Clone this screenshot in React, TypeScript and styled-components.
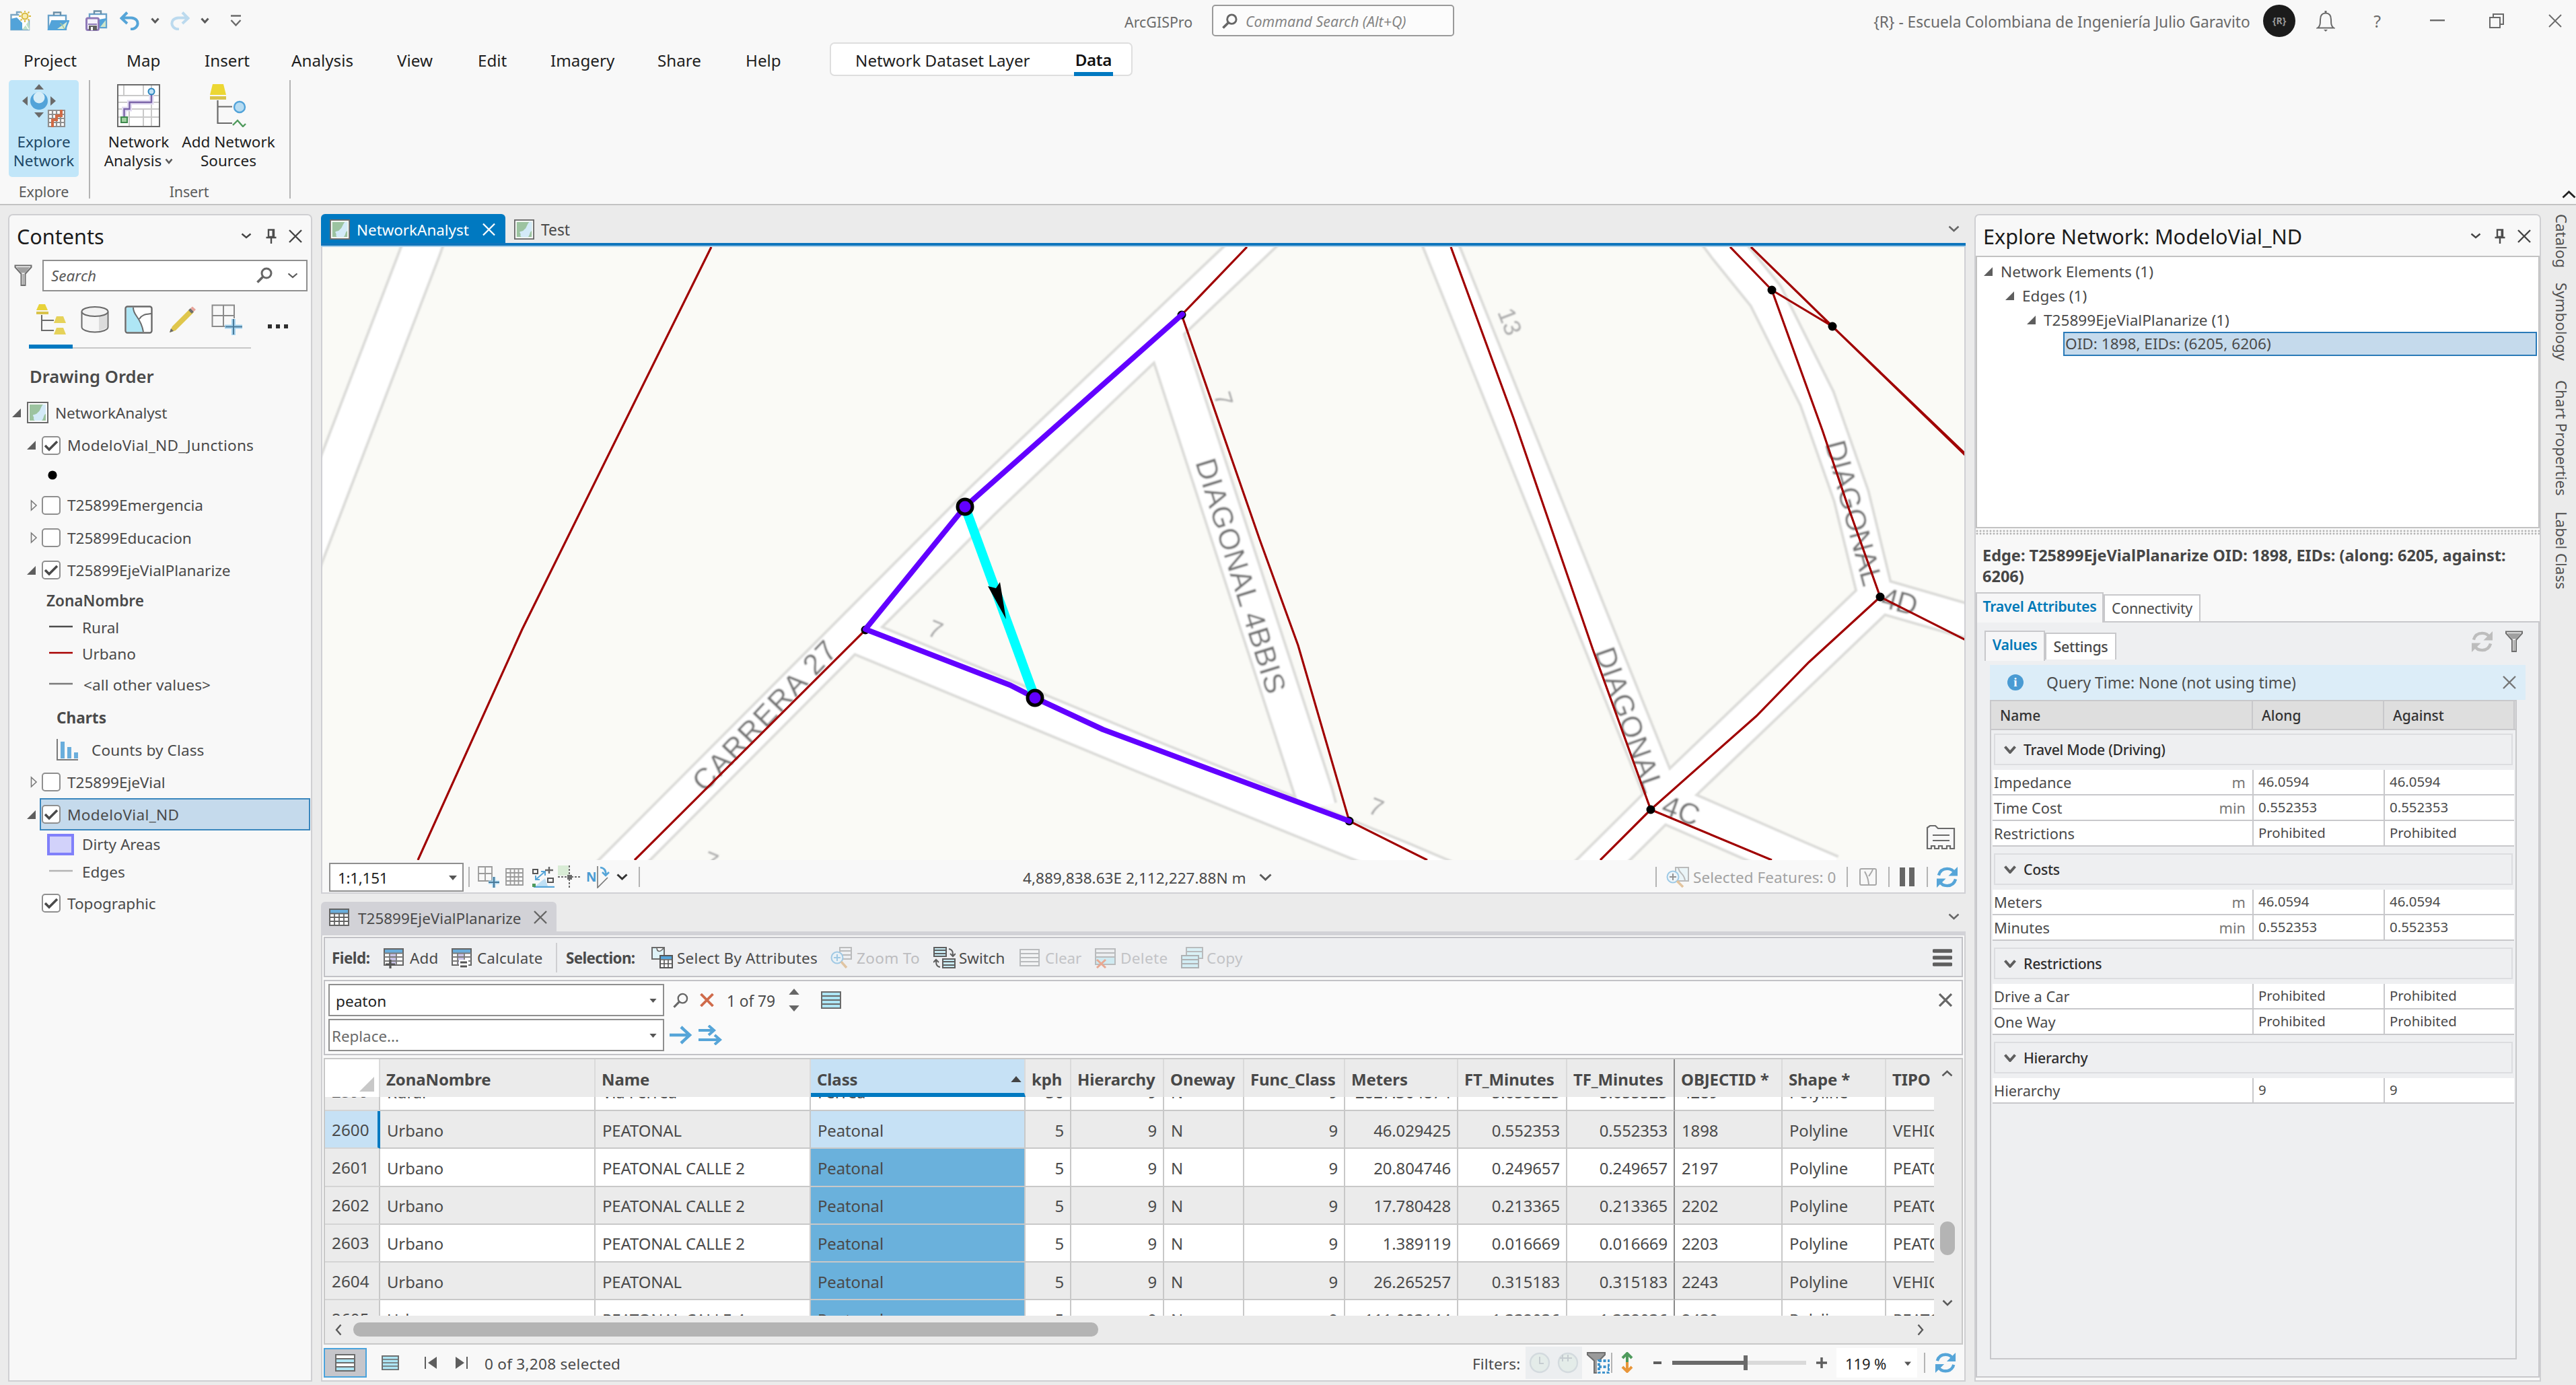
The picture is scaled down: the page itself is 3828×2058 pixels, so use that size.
import React from "react";
import styled, { createGlobalStyle } from "styled-components";

const Global = createGlobalStyle`
  html, body { margin: 0; padding: 0; background: #ebebeb; }
  *, *::before, *::after { box-sizing: border-box; }
  body { font-family: "Noto Sans", "Open Sans", sans-serif; font-size: 24.2px; color: #4a4a4a; }
  svg { display: block; flex: none; }
`;

/* ---------- generic parts ---------- */
const Window = styled.div`
  width: 3828px; height: 2058px; overflow: hidden; background: #ebebeb;
  display: flex; flex-direction: column; white-space: nowrap;
`;
const Text = styled.span<{ $s?: number; $c?: string; $b?: number; $ls?: number; $w?: number; $i?: boolean; $pt?: number }>`
  flex: none;
  font-size: ${p => p.$s ?? 24.2}px;
  color: ${p => p.$c ?? "inherit"};
  font-weight: ${p => p.$b ?? 400};
  letter-spacing: ${p => p.$ls ?? 0}px;
  font-style: ${p => (p.$i ? "italic" : "normal")};
  padding-top: ${p => p.$pt ?? 0}px;
  ${p => (p.$w ? `width:${p.$w}px;` : "")}
`;
const Slot = styled.div<{ $w?: number; $pt?: number }>`
  flex: none; display: flex; align-items: center;
  ${p => (p.$w ? `width:${p.$w}px;` : "")}
  padding-top: ${p => p.$pt ?? 0}px;
`;
const Space = styled.div<{ $w?: number }>`
  ${p => (p.$w ? `flex:none;width:${p.$w}px;` : "flex:1;")}
`;
const VLine = styled.div<{ $h: number; $c?: string }>`
  flex: none; width: 2px; height: ${p => p.$h}px; background: ${p => p.$c ?? "#b4b4b4"};
`;

/* ---------- small icons ---------- */
type IP = { w?: number; h?: number; c?: string; sw?: number };
const Chevron = ({ w = 16, h = 10, c = "#5a5a5a", sw = 3 }: IP) => (
  <svg width={w} height={h} viewBox={`0 0 ${w} ${h}`} fill="none"><path d={`M1.5 1.5L${w / 2} ${h - 2}L${w - 1.5} 1.5`} stroke={c} strokeWidth={sw} /></svg>
);
const ChevronUp = ({ w = 16, h = 10, c = "#5a5a5a", sw = 2.5 }: IP) => (
  <svg width={w} height={h} viewBox={`0 0 ${w} ${h}`} fill="none"><path d={`M1.5 ${h - 1.5}L${w / 2} 2L${w - 1.5} ${h - 1.5}`} stroke={c} strokeWidth={sw} /></svg>
);
const ChevronSide = ({ right = false }: { right?: boolean }) => (
  <svg width="10" height="18" viewBox="0 0 10 18" fill="none"><path d={right ? "M1.5 1.5L8 9L1.5 16.5" : "M8.5 1.5L2 9L8.5 16.5"} stroke="#5a5a5a" strokeWidth="2.4" /></svg>
);
const Cross = ({ w = 20, h = 20, c = "#5a5a5a", sw = 2.4 }: IP) => (
  <svg width={w} height={h} viewBox="0 0 20 20" fill="none"><path d="M1 1L19 19M19 1L1 19" stroke={c} strokeWidth={sw} /></svg>
);
const Pin = () => (
  <svg width="16" height="22" viewBox="0 0 16 22" fill="none"><path d="M4 1.5H12V12H4ZM0.5 13H15.5M8 13V22" stroke="#4d4d4d" strokeWidth="2.4" /><path d="M9.5 1V12H13V1Z" fill="#4d4d4d" /></svg>
);
const Magnifier = ({ w = 24, c = "#666", sw = 3 }: IP) => (
  <svg width={w} height={w} viewBox="0 0 24 24" fill="none"><circle cx="15" cy="9" r="7" stroke={c} strokeWidth={sw} /><path d="M10 14L1.5 22.5" stroke={c} strokeWidth={sw + 0.8} /></svg>
);
const Down = ({ w = 12, h = 7, c = "#555" }: IP) => (
  <svg width={w} height={h} viewBox="0 0 12 7"><path d="M0 0H12L6 7Z" fill={c} /></svg>
);
const Up = ({ w = 18, h = 9, c = "#666" }: IP) => (
  <svg width={w} height={h} viewBox="0 0 12 7"><path d="M0 7H12L6 0Z" fill={c} /></svg>
);
const Funnel = ({ w = 26, h = 32 }: IP) => (
  <svg width={w} height={h} viewBox="0 0 26 32"><path d="M1 1.5H25V4L16 14V31H10V14L1 4Z" fill="#f8f8f8" stroke="#6e6e6e" strokeWidth="2" /><path d="M3 4H23L16 12.5H10Z" fill="#a0a0a0" /><path d="M13 14V30" stroke="#9a9a9a" strokeWidth="2" /></svg>
);
const Refresh = ({ w = 34, c = "#56a5d8" }: IP) => (
  <svg width={w} height={w} viewBox="0 0 34 34" fill="none">
    <path d="M4 14C6 7 11 4 17 4C22 4 26 6 28 10" stroke={c} strokeWidth="4.6" /><path d="M33 1V15H19Z" fill={c} />
    <path d="M30 20C28 27 23 30 17 30C12 30 8 28 6 24" stroke={c} strokeWidth="4.6" /><path d="M1 33V19H15Z" fill={c} />
  </svg>
);
const MapIcon = ({ w = 32 }: IP) => (
  <svg width={w} height={w} viewBox="0 0 32 32"><rect x="1" y="1" width="30" height="30" fill="#fff" stroke="#6a6a6a" strokeWidth="2" /><rect x="4" y="4" width="24" height="24" fill="#9cc3a0" /><path d="M28 4V18C24 20 26 24 22 28H12C8 26 12 24 9 21C8 18 14 20 16 16C20 14 20 8 24 4Z" fill="#d3eaf8" /></svg>
);
const TableIcon = ({ w = 30, h = 26 }: IP) => (
  <svg width={w} height={h} viewBox="0 0 30 26"><rect x="1" y="1" width="28" height="24" fill="#fff" stroke="#646464" strokeWidth="2" /><rect x="2" y="2" width="26" height="5" fill="#6aaedc" /><path d="M1 7.500H29M1 13H29M1 19H29M8 7V25M15 7V25M22 7V25" stroke="#646464" strokeWidth="1.8" /></svg>
);
const RowsIcon = ({ c = "#aee6f5", a = c, s = "#6a6a6a", w = 30, h = 26 }: { c?: string; a?: string; s?: string; w?: number; h?: number }) => (
  <svg width={w} height={h} viewBox="0 0 30 26"><rect x="1" y="1" width="28" height="24" fill={c} stroke={s} strokeWidth="2" /><path d="M2 7H28V13H2ZM2 19H28V25H2Z" fill={a} /><path d="M1 7H29M1 13H29M1 19H29" stroke={s} strokeWidth="1.8" /><rect x="1" y="1" width="28" height="24" fill="none" stroke={s} strokeWidth="2" /></svg>
);

/* ---------- title bar ---------- */
const TitleBar = styled.div`flex: none; height: 63px; background: #f8f8f8; display: flex; align-items: flex-start; padding-top: 7px;`;
const TitleInner = styled.div`display: flex; align-items: center; height: 47px; width: 100%; padding-left: 15px; color: #6a6a6a;`;
const CommandBox = styled.div`
  flex: none; width: 360px; height: 47px; border: 2px solid #9a9a9a; border-radius: 5px; background: #fcfcfc;
  display: flex; align-items: center; padding: 1px 0 0 13px; gap: 12px;
`;
const Avatar = styled.div`
  flex: none; width: 48px; height: 48px; border-radius: 50%; background: #1b1b1b; color: #999;
  font-size: 14px; font-weight: 700; display: flex; align-items: center; justify-content: center;
`;

const NewProject = () => (
  <svg width="32" height="30" viewBox="0 0 32 30" fill="none">
    <path d="M1.5 6H28V28H1.500Z" stroke="#7aa6c4" strokeWidth="2.4" fill="#fff" /><path d="M10 6V2H20V6" stroke="#7aa6c4" strokeWidth="2.4" />
    <path d="M1 12L10 10L18 18V28.500H1Z" fill="#52a3d9" /><path d="M28 15L18 28H29Z" fill="#bfe0c8" />
    <path d="M19 18C24 18 24 24 28 28" stroke="#fff" strokeWidth="1.500" /><circle cx="22" cy="8" r="9" fill="#f8f8f8" />
    <circle cx="22" cy="8" r="4.500" stroke="#d8b93a" strokeWidth="2" fill="#f6ecb4" />
    <path d="M22 -1V2M22 14V17M13 8H16M28 8H31M15.500 1.500L17.500 3.500M28.500 1.500L26.500 3.500M15.500 14.500L17.500 12.500M28.500 14.500L26.500 12.500" stroke="#d8b93a" strokeWidth="1.800" />
  </svg>
);
const OpenProject = () => (
  <svg width="33" height="28" viewBox="0 0 33 28" fill="none">
    <path d="M2 6H28V27H2Z" stroke="#6aa2c9" strokeWidth="2.400" fill="#fff" /><path d="M10 6V1.500H20V6" stroke="#6a8ea6" strokeWidth="2.400" />
    <path d="M7 14H32L27 27H2Z" fill="#52a3d9" stroke="#52a3d9" strokeWidth="2" /><path d="M30 15L26 26H15Z" fill="#d9ecd2" /><path d="M19 18C24 18 23 24 26 26" stroke="#9cc3a0" strokeWidth="1.500" />
  </svg>
);
const SaveProject = () => (
  <svg width="33" height="31" viewBox="0 0 33 31" fill="none">
    <path d="M6 6H31V26H6Z" stroke="#6aa2c9" strokeWidth="2.400" fill="#fff" /><path d="M13 6V1.500H23V6" stroke="#6a8ea6" strokeWidth="2.400" />
    <path d="M20 14L31 12V26H20Z" fill="#52a3d9" /><path d="M30 15L22 25H30Z" fill="#cfe6c9" />
    <rect x="1.500" y="12" width="18" height="17.500" rx="2" fill="#f4f0fa" stroke="#8f7ab8" strokeWidth="3" /><path d="M4 20H17V22H4Z" fill="#8f7ab8" /><rect x="5" y="23" width="12" height="7" fill="#5e5e5e" /><rect x="8" y="25" width="3" height="5" fill="#fff" />
  </svg>
);
const Undo = ({ c = "#56a5d8", flip = false }: { c?: string; flip?: boolean }) => (
  <svg width="30" height="28" viewBox="0 0 30 28" fill="none"><g transform={flip ? "translate(30 0) scale(-1 1)" : undefined}><path d="M11 1.500L2.500 10L11 18M3 9.500H17C30 10 30 26 16 26.500" stroke={c} strokeWidth="4" /></g></svg>
);
const Bell = () => (
  <svg width="28" height="32" viewBox="0 0 28 32" fill="none"><path d="M2 26.500H26C22 24 22 20 22 14C22 8 19 4.500 14 4.500C9 4.500 6 8 6 14C6 20 6 24 2 26.500Z" stroke="#6a6a6a" strokeWidth="2" /><path d="M14 1V5" stroke="#6a6a6a" strokeWidth="3" /><path d="M11 29H17L14 32Z" fill="#6a6a6a" /></svg>
);

/* ---------- ribbon ---------- */
const MenuRow = styled.div`flex: none; height: 50px; background: #f8f8f8; display: flex; align-items: center; padding-left: 35px; color: #1e1e1e;`;
const MenuItem = styled.div<{ $w: number }>`flex: none; width: ${p => p.$w}px; padding-top: 3px; font-size: 24.2px;`;
const ContextTabs = styled.div`
  flex: none; width: 450px; height: 50px; border: 2px solid #dedede; border-radius: 7px; background: #fff;
  display: flex; align-items: center; justify-content: space-between; padding: 0 27px 0 36px; margin-left: 1px;
`;
const ActiveTab = styled.div`
  height: 50px; padding: 7px 2px 0; border-bottom: 6px solid #0079c1; font-weight: 600; color: #111; line-height: 38px; font-size: 24.2px; letter-spacing: -0.4px;
`;
const Ribbon = styled.div`
  flex: none; height: 192px; background: #f8f8f8; border-bottom: 2px solid #c3c3c3; display: flex; padding: 6px 0 0 13px; color: #1e1e1e;
`;
const Group = styled.div<{ $w: number }>`flex: none; width: ${p => p.$w}px; display: flex; flex-direction: column;`;
const GroupRow = styled.div`flex: none; display: flex; height: 149px;`;
const GroupName = styled.div`text-align: center; color: #5c5c5c; font-size: 21.5px; line-height: 34px; letter-spacing: -0.2px;`;
const BigButton = styled.div<{ $w: number; $on?: boolean }>`
  flex: none; width: ${p => p.$w}px; height: 144px; border-radius: 5px; padding-top: 6px;
  background: ${p => (p.$on ? "#c1e6f9" : "transparent")}; color: ${p => (p.$on ? "#1d4866" : "#1e1e1e")};
  display: flex; flex-direction: column; align-items: center; font-size: 22.5px; line-height: 28px; text-align: center;
`;
const BigLabel = styled.div`padding-top: 8px; display: flex; flex-direction: column; align-items: center;`;
const LabelLine = styled.div`display: flex; align-items: center; gap: 5px; height: 28px;`;
const CollapseSlot = styled.div`flex: 1; display: flex; justify-content: flex-end; align-items: flex-end; padding-bottom: 8px;`;

const ExploreIcon = () => (
  <svg width="64" height="64" viewBox="0 0 64 64">
    <circle cx="25" cy="25" r="13" fill="#52a3d9" /><circle cx="25" cy="20" r="8.500" fill="#d6edf8" />
    <path d="M18 8H32L25 0ZM18 42H32L25 50ZM8 18V32L0 25ZM42 18V32L50 25Z" fill="#6a6a6a" />
    <rect x="38" y="38" width="26" height="26" fill="#fff" /><path d="M39 38V64M45 38V64M51 38V64M57 38V64M63 38V64M38 39H64M38 45H64M38 51H64M38 57H64M38 63H64" stroke="#8f8f8f" strokeWidth="2.200" />
    <path d="M45 64V53H51V47H58V38" stroke="#cf6a45" strokeWidth="4" fill="none" />
  </svg>
);
const AnalysisIcon = () => (
  <svg width="64" height="64" viewBox="0 0 64 64" fill="none">
    <rect x="1" y="1" width="62" height="62" fill="#fff" stroke="#6a6a6a" strokeWidth="2" />
    <path d="M2 17H62M2 37H62M2 49H62M10 2V17M39 2V17M51 2V62M18 28V62M39 37V62M2 27H62" stroke="#c9c9c9" strokeWidth="2" />
    <path d="M10.500 50V37H18.500V27H51V12" stroke="#e3dcf2" strokeWidth="7" /><path d="M10.500 50V37H18.500V27H51V12" stroke="#7a64a8" strokeWidth="2.400" />
    <circle cx="51" cy="11" r="4.500" fill="#bfe0f5" stroke="#2b86bd" strokeWidth="2" /><rect x="6" y="49" width="9" height="8" fill="#9fcf9f" stroke="#3f8a4e" strokeWidth="2" />
  </svg>
);
const SourcesIcon = () => (
  <svg width="64" height="64" viewBox="0 0 64 64" fill="none">
    <path d="M8 0H24L28 16H4Z" fill="#ecd733" /><path d="M4 18H28V23H4Z" fill="#d9c34a" /><path d="M15.500 24V58H37M16 33.500H37" stroke="#6a6a6a" strokeWidth="2.200" />
    <circle cx="48" cy="34" r="8" fill="#b7dcf2" stroke="#52a3d9" strokeWidth="2.400" /><path d="M38 61L45 54L53 63L57 59" stroke="#4f9a5c" strokeWidth="2.400" />
  </svg>
);

/* ---------- docking ---------- */
const Body = styled.div`flex: 1; display: flex; padding: 13px 0 5px 12px; min-height: 0;`;
const Panel = styled.div<{ $w: number }>`
  flex: none; width: ${p => p.$w}px; background: #f8f8f8; border: 2px solid #cfcfd2; border-radius: 7px 7px 0 0;
  display: flex; flex-direction: column; margin-right: 13px; min-height: 0;
`;
const Center = styled.div`flex: none; width: 2444px; display: flex; flex-direction: column; margin-right: 13px; min-height: 0;`;
const SideStrip = styled.div`
  flex: none; width: 52px; margin-left: -13px; display: flex; flex-direction: column; align-items: center; padding-left: 8px;
`;
const SideLabel = styled.div<{ $h: number }>`
  writing-mode: vertical-rl; height: ${p => p.$h}px; font-size: 22.3px; line-height: 30px; color: #505050; flex: none;
`;

/* ---------- contents panel ---------- */
const PanelHead = styled.div<{ $pl: number }>`flex: none; height: 60px; display: flex; align-items: center; padding: 1px 13px 0 ${p => p.$pl}px; color: #1b1b1b;`;
const SearchRow = styled.div`flex: none; display: flex; align-items: center; gap: 15px; height: 56px; padding: 2px 5px 0 7px;`;
const SearchBox = styled.div`
  flex: 1; height: 47px; border: 2px solid #8f8f8f; background: #fff; display: flex; align-items: center; padding: 0 12px 0 11px;
`;
const TocTabs = styled.div`flex: none; height: 82px; display: flex; align-items: flex-start; padding-left: 29px; padding-top: 11px;`;
const TocTab = styled.div<{ $on?: boolean; $w?: number }>`
  flex: none; width: ${p => p.$w ?? 65}px; height: 71px; display: flex; align-items: center; justify-content: center; padding-bottom: ${p => (p.$on ? 10 : 14)}px;
  border-bottom: ${p => (p.$on ? "6px solid #0079c1" : "2px solid #c8c8c8")};
`;
const More = styled.div`display: flex; gap: 6px; padding: 35px 0 0 25px;`;
const Dot = styled.div`width: 6px; height: 6px; background: #2e2e2e;`;
const DrawOrder = styled.div`flex: none; height: 71px; padding: 24px 0 0 30px; font-size: 25.6px; font-weight: 600; color: #4a4a4a;`;
const TocRow = styled.div<{ $h: number; $pl: number; $ls?: number }>`
  flex: none; height: ${p => p.$h}px; display: flex; align-items: center; padding-left: ${p => p.$pl}px; font-size: 22.6px; letter-spacing: ${p => p.$ls ?? -0.05}px;
`;
const TocSelect = styled.div`
  flex: 1; height: 48px; display: flex; align-items: center; padding-left: 1px; margin-right: 1px;
  background: #c5daec; border: 2px solid #3a86bd; 
`;
const Check = styled.div`
  flex: none; width: 28px; height: 28px; border: 2px solid #8f8f8f; border-radius: 5px; background: #fff; margin-right: 10px;
  display: flex; align-items: center; justify-content: center;
`;
const Tri = ({ open }: { open?: boolean }) =>
  open ? (
    <svg width="13" height="13" viewBox="0 0 13 13"><path d="M13 0V13H0Z" fill="#5e5e5e" /></svg>
  ) : (
    <svg width="13" height="18" viewBox="0 0 13 18"><path d="M2.500 2L10 9L2.500 16Z" fill="none" stroke="#7a7a7a" strokeWidth="1.600" /></svg>
  );
const Tick = () => <svg width="20" height="18" viewBox="0 0 20 18"><path d="M1 9L7 15L19 3" stroke="#4a4a4a" strokeWidth="3.600" fill="none" /></svg>;
const Line = ({ c }: { c: string }) => <svg width="49" height="6" viewBox="0 0 49 6"><path d="M0 2H35" stroke={c} strokeWidth="2.600" /></svg>;

const Layer = ({ h, name, on, open, noTri, ls }: { h: number; name: string; on?: boolean; open?: boolean; noTri?: boolean; ls?: number }) => (
  <TocRow $h={h} $pl={26} $ls={ls}>
    <Slot $w={22}>{!noTri && (open ? <Tri open /> : <><Space $w={4} /><Tri /></>)}</Slot>
    <Check>{on && <Tick />}</Check>{name}
  </TocRow>
);

const Contents = () => (
  <Panel $w={452}>
    <PanelHead $pl={11}>
      <Text $s={30.6}>Contents</Text><Space />
      <Slot $w={37}><Chevron w={16} h={9} c="#444" sw={2.400} /></Slot><Slot $w={34}><Pin /></Slot><Cross c="#444" />
    </PanelHead>
    <SearchRow>
      <Funnel w={27} />
      <SearchBox><Text $s={22.500} $i $c="#5a5a5a">Search</Text><Space /><Magnifier /><Space $w={22} /><Chevron w={16} h={9} sw={2.200} /></SearchBox>
    </SearchRow>
    <TocTabs>
      <TocTab $on><svg width="46" height="46" viewBox="0 0 46 46"><path d="M5 0H14L18 9H1Z" fill="#e8d23a" /><path d="M1 11H19V15H1Z" fill="#d9c34a" /><path d="M9 16V39H27M9 24H27" stroke="#6a6a6a" strokeWidth="2" fill="none" /><path d="M31 18H41L45 28H27ZM31 35H41L45 45H27Z" fill="#e6d25a" /></svg></TocTab>
      <TocTab><svg width="42" height="42" viewBox="0 0 42 42"><path d="M1.500 9V32C1.500 36 10 39.500 21 39.500S40.500 36 40.500 32V9" fill="#f6f6f6" stroke="#6a6a6a" strokeWidth="2" /><path d="M27 15L39 11V33L27 38Z" fill="#dcdcdc" /><ellipse cx="21" cy="9" rx="19.500" ry="7" fill="#f2f2f2" stroke="#6a6a6a" strokeWidth="2" /></svg></TocTab>
      <TocTab><svg width="42" height="42" viewBox="0 0 42 42"><rect x="1.500" y="1.500" width="39" height="39" rx="3" fill="#fff" stroke="#6a6a6a" strokeWidth="2.400" /><path d="M3 3H13C13 16 24 16 28 39H3Z" fill="#aee6f5" /><path d="M13 3C13 16 24 16 28 39M22 20C26 13 32 13 40 12" stroke="#6a6a6a" strokeWidth="2" fill="none" /></svg></TocTab>
      <TocTab><svg width="42" height="42" viewBox="0 0 42 42"><path d="M2 40L6 31L32 5L38 10L11 37Z" fill="#dfc64c" /><path d="M2 40L4 34L8 38Z" fill="#6a6a6a" /><path d="M30 7L33 4L38 9L35 12Z" fill="#6e6e6e" /><path d="M33 4L36 1.500L41 6L38 9Z" fill="#e8a49a" /></svg></TocTab>
      <TocTab $w={70}><svg width="48" height="46" viewBox="0 0 48 46"><path d="M1.500 1.500H34V33H1.500ZM1.500 17H34M18 1.500V33" fill="none" stroke="#8a8a8a" strokeWidth="2" /><path d="M20 29H28V21H38V29H48V38H38V46H28V38H20Z" fill="#f8f8f8" /><path d="M33 22V46M20 33.500H46" stroke="#a9d6f0" strokeWidth="6" /><path d="M33 22V45M21 33.500H46" stroke="#4a7a9a" strokeWidth="2" /></svg></TocTab>
      <More><Dot /><Dot /><Dot /></More>
    </TocTabs>
    <DrawOrder>Drawing Order</DrawOrder>
    <TocRow $h={48} $pl={4} $ls={-0.15}><Slot $w={22}><Tri open /></Slot><MapIcon /><Space $w={10} />NetworkAnalyst</TocRow>
    <Layer h={49} name="ModeloVial_ND_Junctions" on open ls={0.25} />
    <TocRow $h={40} $pl={57}><svg width="14" height="14" viewBox="0 0 14 14"><circle cx="7" cy="7" r="6.600" fill="#000" /></svg></TocRow>
    <Layer h={49} name="T25899Emergencia" />
    <Layer h={48} name="T25899Educacion" />
    <Layer h={48} name="T25899EjeVialPlanarize" on open />
    <TocRow $h={42} $pl={55}><Text $s={22.600} $b={600}>ZonaNombre</Text></TocRow>
    <TocRow $h={38} $pl={59}><Line c="#4d4d4d" />Rural</TocRow>
    <TocRow $h={40} $pl={59}><Line c="#a80000" />Urbano</TocRow>
    <TocRow $h={52} $pl={59}><Line c="#7a7a7a" /><Space $w={2} /><Text $s={22.6} $ls={0.1}>&lt;all other values&gt;</Text></TocRow>
    <TocRow $h={47} $pl={70}><Text $s={22.600} $b={700}>Charts</Text></TocRow>
    <TocRow $h={48} $pl={70} $ls={0.1}><svg width="52" height="32" viewBox="0 0 52 32"><path d="M1 0V31H32" stroke="#7a7a7a" strokeWidth="2" fill="none" /><path d="M6 4H12V29H6ZM16 12H22V29H16ZM26 20H32V29H26Z" fill="#6aaedc" /></svg>Counts by Class</TocRow>
    <Layer h={48} name="T25899EjeVial" />
    <TocRow $h={48} $pl={26} $ls={0.35}><Slot $w={19}><Tri open /></Slot><TocSelect><Check><Tick /></Check>ModeloVial_ND</TocSelect></TocRow>
    <TocRow $h={41} $pl={56}><svg width="52" height="32" viewBox="0 0 52 32"><rect x="2" y="2" width="36" height="28" fill="#d2d2fa" stroke="#8080fa" strokeWidth="4" /></svg>Dirty Areas</TocRow>
    <TocRow $h={40} $pl={59}><Line c="#b4b4b4" />Edges</TocRow>
    <Layer h={54} name="Topographic" on noTri />
  </Panel>
);

/* ---------- map view ---------- */
const DocTabs = styled.div`flex: none; height: 43px; display: flex; align-items: stretch;`;
const DocTab = styled.div<{ $on?: boolean; $w: number }>`
  flex: none; width: ${p => p.$w}px; display: flex; align-items: center; padding: 2px 0 0 13px; gap: 10px; border-radius: 6px 6px 0 0;
  background: ${p => (p.$on ? "#0079c1" : "transparent")}; color: ${p => (p.$on ? "#fff" : "#4a4a4a")}; font-size: 22.600px;
`;
const BlueRule = styled.div`flex: none; height: 6px; background: #0f75bc; border-bottom: 2px solid #a9cfe9; border-top: 0;`;
const MapBox = styled.div`flex: none; height: 911px; border: solid #cfcfd4; border-width: 0 2px; background: #fafaf6;`;
const StatusBar = styled.div`
  flex: none; height: 50px; background: #f8f8f8; border: 2px solid #d0d0d5; border-top: 0; display: flex; align-items: center; padding: 2px 9px 0 10px;
`;
const ScaleBox = styled.div`
  flex: none; width: 200px; height: 43px; border: 2px solid #8f8f8f; background: #fff; color: #222; display: flex; align-items: center;
  justify-content: space-between; padding: 2px 8px 0 11px; font-size: 22.500px; letter-spacing: -0.3px;
`;

const roads: { d: string; w: number }[] = [
  { d: "M400 960L627 367L650 300", w: 58 },
  { d: "M878 1328L1459 745L1857 367L1900 326", w: 54 },
  { d: "M1276 946L1700 1122L2084 1278L2150 1306", w: 53 },
  { d: "M1728 490L1745 541L1953 1181L1958 1200", w: 56 },
  { d: "M2122 317L2142 367L2470 1182", w: 51 },
  { d: "M2530 320L2565 367L2624 440L2700 592L2751 737L2787 884", w: 53 },
  { d: "M2342 1318L2459 1202L2778 897L2787 888", w: 56 },
  { d: "M2470 1191L2669 1278L2720 1300", w: 59 },
  { d: "M2796 886L2921 922L2960 933", w: 50 },
];
const streets = [
  "M1057 367L776 935L621 1278",
  "M1286 936L943 1278",
  "M1853 367L1756 468L1872 802L1929 959L2005 1220L2121 1278",
  "M2156 367L2249 621L2367 965L2453 1203L2378 1278M2453 1203L2633 1278",
  "M2453 1203L2610 1064L2688 984L2794 887L2921 951",
  "M2571 367L2633 431L2708 639L2746 752L2794 887",
  "M2633 431L2723 485L2921 675M2602 367L2723 485L2921 677",
];
const MapLabel = ({ x, y, a, t, s = 43.5, c = "#727272", len }: { x: number; y: number; a: number; t: string; s?: number; c?: string; len?: number }) => (
  <text transform={`translate(${x} ${y}) rotate(${a})`} dy={s * 0.36} fontFamily='"Liberation Sans", sans-serif' fontSize={s} fill={c} textLength={len}>{t}</text>
);
const MapCanvas = () => (
  <svg width="2440" height="911" viewBox="479 367 2440 911">
    <defs><filter id="soft"><feGaussianBlur stdDeviation="1.200" /></filter></defs>
    <rect x="479" y="367" width="2440" height="911" fill="#fafaf6" />
    <g filter="url(#soft)" fill="none" strokeLinejoin="round">
      {roads.map((r, i) => <path key={i} d={r.d} stroke="#dcdcd9" strokeWidth={r.w + 4} />)}
      {roads.map((r, i) => <path key={i} d={r.d} stroke="#fff" strokeWidth={r.w - 4} />)}
      <MapLabel x={1036} y={1168} a={-46.500} t="CARRERA 27" len={289} />
      <MapLabel x={1791} y={682} a={72.800} t="DIAGONAL 4BBIS" len={363} />
      <MapLabel x={2384} y={963} a={70.500} t="DIAGONAL" len={226} />
      <MapLabel x={2472} y={1194} a={20} t="4C" len={56} />
      <MapLabel x={2727} y={655} a={75} t="DIAGONAL" len={222} />
      <MapLabel x={2797} y={886} a={15} t="4D" len={54} />
      <MapLabel x={1381} y={931} a={22} t="7" s={36} c="#acacac" />
      <MapLabel x={1816} y={583} a={73} t="7" s={36} c="#acacac" />
      <MapLabel x={2237} y={459} a={69} t="13" s={36} c="#acacac" />
      <MapLabel x={2036} y={1195} a={22} t="7" s={36} c="#acacac" />
      <MapLabel x={1047} y={1275} a={22} t="7" s={36} c="#acacac" />
    </g>
    <g fill="none" stroke="#a00000" strokeWidth="3.200">{streets.map(d => <path key={d} d={d} />)}</g>
    {[[1756, 468], [1286, 936], [2005, 1220], [2453, 1203], [2794, 887], [2633, 431], [2723, 485]].map(([x, y]) => <circle key={x} cx={x} cy={y} r="6.500" fill="#000" />)}
    <path d="M1757 467L1434 753L1286 935L1501 1018L1538 1037L1639 1084L2005 1220" fill="none" stroke="#6200ff" strokeWidth="8" strokeLinejoin="round" strokeLinecap="round" />
    <path d="M1434 753L1538 1037" stroke="#00ffff" strokeWidth="14" />
    <path d="M1495 920L1468 871L1480 874L1486 865Z" fill="#000" />
    {[[1434, 753], [1538, 1037]].map(([x, y]) => <circle key={x} cx={x} cy={y} r="11" fill="#6200ff" stroke="#000" strokeWidth="5" />)}
    <g fill="#f8f8f8" stroke="#6a6a6a" strokeWidth="2.200"><path d="M2864 1230L2868 1227H2876L2880 1231H2904V1261H2898V1257H2893V1261H2886V1257H2881V1261H2875V1257H2870V1261H2864Z" /><path d="M2872 1241H2897M2872 1249H2897" /></g>
  </svg>
);

const Status = () => (
  <StatusBar>
    <ScaleBox>1:1,151<Down /></ScaleBox>
    <Space $w={7} /><VLine $h={30} /><Space $w={12} />
    <Slot $w={41}><svg width="34" height="34" viewBox="0 0 34 34" fill="none"><path d="M1 2H21V23H1ZM1 12H21M11 2V23" stroke="#9a9a9a" strokeWidth="1.800" /><path d="M24 17V33M16 25H32" stroke="#a9d6f0" strokeWidth="5" /><path d="M24 17V33M16 25H32" stroke="#4a7a9a" strokeWidth="2.200" /></svg></Slot>
    <Slot $w={39}><svg width="27" height="26" viewBox="0 0 27 26" fill="none"><path d="M1 1H26V25H1ZM1 7H26M1 13H26M1 19H26M7.500 1V25M13.500 1V25M19.500 1V25" stroke="#9a9a9a" strokeWidth="1.800" /></svg></Slot>
    <Slot $w={39}><svg width="34" height="32" viewBox="0 0 34 32" fill="none"><path d="M6 20L20 8M6 14V20H12M14 8H20V14" stroke="#56a5d8" strokeWidth="2" /><path d="M2 5H9V11H2ZM24 18H32V24H24Z" stroke="#555" strokeWidth="2" /><path d="M20 6H32M26 1V11" stroke="#666" strokeWidth="2.400" /><path d="M5 30L20 18L24 30Z" fill="#bfe0f5" /><path d="M3 31H34" stroke="#56a5d8" strokeWidth="2.400" /><path d="M1 26H6V31H1Z" fill="#4f9a5c" /></svg></Slot>
    <Slot $w={42}><svg width="34" height="34" viewBox="0 0 34 34"><rect x="0" y="0" width="16" height="15" fill="#d9ecd6" /><path d="M17 0V33M0 17H34" stroke="#6a6a6a" strokeWidth="2" strokeDasharray="3 2" /><rect x="14" y="14" width="7" height="7" fill="#6a6a6a" /></svg></Slot>
    <Slot $w={45}><Text $s={19} $b={700} $c="#4a9bd3">N</Text><svg width="20" height="34" viewBox="0 0 20 34" fill="none"><path d="M2 1V33L17 18" stroke="#777" strokeWidth="1.600" /><path d="M6 3C13 4 15 8 14 15M9 10L14 15L19 10" stroke="#56a5d8" strokeWidth="2.600" /></svg></Slot>
    <Chevron w={17} c="#333" /><Space $w={16} /><VLine $h={30} />
    <Space $w={569} />
    <Text $s={22.600} $w={351} $pt={2}>4,889,838.63E 2,112,227.88N m</Text><Chevron w={19} h={11} />
    <Space />
    <VLine $h={30} /><Space $w={14} />
    <svg width="34" height="32" viewBox="0 0 34 32" fill="none" opacity="0.55"><path d="M14 2H33V22H14Z" fill="#dff3f8" stroke="#888" strokeWidth="2" /><path d="M18 3C20 12 26 10 28 21" stroke="#888" strokeWidth="2" /><circle cx="10" cy="16" r="8.500" fill="#e6f3fb" stroke="#56a5d8" strokeWidth="2" /><path d="M10 11V21M5 16H15" stroke="#444" strokeWidth="2" /><path d="M16 22L25 31" stroke="#d29a55" strokeWidth="3.500" /></svg>
    <Space $w={6} /><Text $s={22.500} $c="#a3a3a3" $w={228} $ls={0.080}>Selected Features: 0</Text>
    <VLine $h={30} /><Space $w={17} />
    <svg width="26" height="26" viewBox="0 0 26 26" fill="none" stroke="#a8a8a8" strokeWidth="2"><rect x="1" y="1" width="24" height="24" rx="2" /><path d="M8 5C11 11 13 13 14 24M14 12C16 9 18 7 20 2" /></svg>
    <Space $w={17} /><VLine $h={30} /><Space $w={15} />
    <svg width="23" height="28" viewBox="0 0 23 28"><path d="M0 0H8V28H0ZM14 0H22V28H14Z" fill="#666" /></svg>
    <Space $w={17} /><VLine $h={30} /><Space $w={12} /><Refresh w={33} />
  </StatusBar>
);

/* ---------- attribute table ---------- */
const LowerTabs = styled.div`flex: none; height: 50px; margin-top: 12px; border-bottom: 6px solid #d2d2d7; display: flex; align-items: stretch;`;
const LowerTab = styled.div`
  flex: none; width: 350px; background: #d2d2d7; border-radius: 6px 6px 0 0; display: flex; align-items: center; padding: 2px 0 0 12px; gap: 13px; font-size: 22.400px;
`;
const LowerPanel = styled.div`
  flex: 1; border: 2px solid #cfcfd2; border-top: 0; background: #f8f8f8; padding: 2px 2px 0; display: flex; flex-direction: column; min-height: 0;
`;
const Toolbar = styled.div`
  flex: none; height: 60px; border: 2px solid #c2c2c6; background: #eeeff1; display: flex; align-items: center; padding: 2px 0 0 10px; margin-bottom: 4px;
`;
const FindArea = styled.div`
  flex: none; height: 112px; border: 2px solid #c2c2c6; background: #fafafa; margin-bottom: 4px; padding: 4px 14px 0 5px; display: flex; flex-direction: column; gap: 4px;
`;
const FindRow = styled.div`display: flex; align-items: center; height: 48px;`;
const FindInput = styled.div<{ $pl: number }>`
  flex: none; width: 499px; height: 48px; border: 2px solid #8f8f8f; background: #fff; display: flex; align-items: center; justify-content: space-between;
  padding: 2px 9px 0 ${p => p.$pl}px;
`;
const Spinner = styled.div`display: flex; flex-direction: column; gap: 16px; width: 49px;`;
const Grid = styled.div`flex: none; height: 426px; border: 2px solid #c8c8c8; background: #ebebeb; display: flex; flex-direction: column;`;
const GridTop = styled.div`flex: none; height: 381px; display: flex;`;
const GridCells = styled.div`flex: none; width: 2391px; overflow: hidden; display: flex; flex-direction: column;`;
const HeadRow = styled.div`flex: none; height: 56px; display: flex; position: relative; background: #ebebeb; z-index: 1;`;
const HeadCell = styled.div<{ $w: number; $on?: boolean; $dark?: boolean }>`
  flex: none; width: ${p => p.$w}px; border-right: 2px solid ${p => (p.$dark ? "#8a8a8a" : "#dadada")}; background: ${p => (p.$on ? "#c6e1f5" : "#ebebeb")};
  border-bottom: ${p => (p.$on ? "6px solid #0079c1" : "0")}; display: flex; align-items: center; justify-content: space-between;
  padding: ${p => (p.$on ? "8px 4px 0 9px" : "3px 0 0 9px")}; font-weight: 700; font-size: 24px; letter-spacing: -0.1px; color: #484848;
`;
const Corner = styled.div`flex: none; width: 82px; background: #fff; border-right: 2px solid #dadada; display: flex; align-items: flex-end; justify-content: flex-end; padding: 0 7px 8px 0;`;
const Rows = styled.div`height: 325px; overflow: hidden;`;
const RowStack = styled.div`margin-top: -35.250px;`;
const Row = styled.div<{ $alt: boolean }>`height: 56.250px; display: flex; background: ${p => (p.$alt ? "#ebebeb" : "#fff")};`;
const RowHead = styled.div<{ $on?: boolean }>`
  flex: none; width: 82px; border-right: ${p => (p.$on ? "4px solid #0079c1" : "2px solid #c8c8c8")}; border-bottom: 2px solid #d4d4d4;
  background: ${p => (p.$on ? "#c6e1f5" : "#ebebeb")}; padding-left: 10px; display: flex; align-items: center; font-size: 24.200px; letter-spacing: 0.1px;
`;
const Cell = styled.div<{ $w: number; $r?: boolean; $bg?: string; $dark?: boolean }>`
  flex: none; width: ${p => p.$w}px; border-right: 2px solid ${p => (p.$dark ? "#8a8a8a" : "#c8c8c8")}; border-bottom: 2px solid #c8c8c8;
  background: ${p => p.$bg ?? "transparent"}; display: flex; align-items: center; justify-content: ${p => (p.$r ? "flex-end" : "flex-start")};
  padding: 2px 9px 0 10px; font-size: 23.900px; overflow: hidden; letter-spacing: -0.1px;
`;
const VScroll = styled.div`flex: 1; display: flex; flex-direction: column; align-items: center; padding: 16px 0 14px; padding-right: 2px;`;
const VThumb = styled.div`width: 22px; height: 50px; border-radius: 11px; background: #b4b4b4; margin-bottom: 66px;`;
const HScroll = styled.div`flex: 1; display: flex; align-items: center; padding: 0 56px 0 15px;`;
const HThumb = styled.div`width: 1107px; height: 21px; border-radius: 10px; background: #b4b4b4; margin-left: 17px;`;
const Footer = styled.div`flex: 1; display: flex; align-items: center; position: relative; padding-right: 10px;`;
const ModeButton = styled.div`
  flex: none; width: 64px; height: 44px; background: #c6c6cb; border: 2px solid #4aa3dc; display: flex; align-items: center; justify-content: center;
`;
const DisabledPair = styled.div`flex: none; width: 84px; height: 48px; background: #eceef0; display: flex; align-items: center; justify-content: space-around;`;
const Track = styled.div`flex: none; width: 199px; height: 6px; background: #dadada; display: flex; align-items: center;`;
const TrackFill = styled.div`width: 106px; height: 6px; background: #6a6a6a;`;
const TrackThumb = styled.div`width: 6px; height: 22px; background: #6a6a6a;`;
const ZoomBox = styled.div`flex: none; width: 120px; height: 44px; background: #fff; color: #222; display: flex; align-items: center; justify-content: space-between; padding: 3px 9px 0 13px; font-size: 22px; letter-spacing: -0.1px;`;

const cols: { n: string; w: number; r?: boolean; dark?: boolean }[] = [
  { n: "ZonaNombre", w: 320 }, { n: "Name", w: 320 }, { n: "Class", w: 319 }, { n: "kph", w: 68, r: true }, { n: "Hierarchy", w: 138, r: true },
  { n: "Oneway", w: 119 }, { n: "Func_Class", w: 150, r: true }, { n: "Meters", w: 168, r: true }, { n: "FT_Minutes", w: 162, r: true },
  { n: "TF_Minutes", w: 160, r: true, dark: true }, { n: "OBJECTID *", w: 160 }, { n: "Shape *", w: 154 }, { n: "TIPO", w: 120 },
];
const data: [string, string[]][] = [
  ["2599", ["Rural", "Vía Férrea", "Férrea", "30", "9", "N", "9", "2827.304874", "5.655525", "5.655525", "4289", "Polyline", ""]],
  ["2600", ["Urbano", "PEATONAL", "Peatonal", "5", "9", "N", "9", "46.029425", "0.552353", "0.552353", "1898", "Polyline", "VEHICULAR"]],
  ["2601", ["Urbano", "PEATONAL CALLE 2", "Peatonal", "5", "9", "N", "9", "20.804746", "0.249657", "0.249657", "2197", "Polyline", "PEATONAL"]],
  ["2602", ["Urbano", "PEATONAL CALLE 2", "Peatonal", "5", "9", "N", "9", "17.780428", "0.213365", "0.213365", "2202", "Polyline", "PEATONAL"]],
  ["2603", ["Urbano", "PEATONAL CALLE 2", "Peatonal", "5", "9", "N", "9", "1.389119", "0.016669", "0.016669", "2203", "Polyline", "PEATONAL"]],
  ["2604", ["Urbano", "PEATONAL", "Peatonal", "5", "9", "N", "9", "26.265257", "0.315183", "0.315183", "2243", "Polyline", "VEHICULAR"]],
  ["2605", ["Urbano", "PEATONAL CALLE 4", "Peatonal", "5", "9", "N", "9", "111.003144", "1.332036", "1.332036", "2430", "Polyline", "PEATONAL"]],
];

const AddField = ({ calc = false }: { calc?: boolean }) => (
  <svg width="32" height="32" viewBox="0 0 32 32"><rect x="1" y="3" width="28" height="24" fill="#fff" stroke="#646464" strokeWidth="2" /><rect x="9" y="9" width="10" height="17" fill="#c9c3e6" /><rect x="2" y="4" width="26" height="5" fill="#6aaedc" /><path d="M1 9.500H29M1 15H29M1 21H29M9 9V27M19 9V27" stroke="#7a7a7a" strokeWidth="1.800" />
    {calc ? <><rect x="11" y="19" width="14" height="13" fill="#fff" /><path d="M13 23H23M13 29H23" stroke="#555" strokeWidth="3" /></> : <path d="M10 19V32M3 26H17" stroke="#555" strokeWidth="3.200" />}
  </svg>
);

const AttributeTable = () => (
  <LowerPanel>
    <Toolbar>
      <Text $s={22.400} $b={700} $w={77} $ls={-0.500}>Field:</Text>
      <Slot $w={39}><AddField /></Slot><Text $s={22.400} $w={62} $ls={0.2}>Add</Text>
      <Slot $w={38}><AddField calc /></Slot><Text $s={22.400} $w={117} $ls={0.15}>Calculate</Text>
      <VLine $h={44} $c="#cfcfd2" /><Space $w={13} />
      <Text $s={22.400} $b={700} $w={127} $ls={-0.600}>Selection:</Text>
      <Slot $w={38}><svg width="32" height="32" viewBox="0 0 32 32"><path d="M1 1H19V18H1Z" fill="#dff3f8" stroke="#6a6a6a" strokeWidth="2" /><path d="M8 2C9 8 13 8 18 2" fill="#fff" stroke="#6a6a6a" strokeWidth="1.600" /><rect x="13" y="13" width="18" height="18" fill="#fff" stroke="#555" strokeWidth="2" /><rect x="14" y="14" width="16" height="4" fill="#52a3d9" /><path d="M13 19H31M13 25H31M19 19V31M25 19V31" stroke="#555" strokeWidth="1.600" /></svg></Slot>
      <Text $s={22.500} $w={228} $ls={0.180}>Select By Attributes</Text>
      <Slot $w={39}><svg width="32" height="32" viewBox="0 0 32 32" fill="none" opacity="0.5"><path d="M14 1H31V18H14ZM14 6H31M14 12H31" stroke="#888" strokeWidth="2" /><circle cx="10" cy="16" r="8.500" fill="#e6f3fb" stroke="#56a5d8" strokeWidth="2" /><path d="M10 11V21M5 16H15" stroke="#56a5d8" strokeWidth="2" /><path d="M16 22L24 31" stroke="#d29a55" strokeWidth="3.500" /></svg></Slot>
      <Text $s={22.600} $c="#bdbdc0" $w={114} $ls={0.300}>Zoom To</Text>
      <Slot $w={38}><svg width="33" height="32" viewBox="0 0 33 32" fill="none"><path d="M1 1H19V14H1ZM1 5H19M1 10H19M14 18H32V31H14ZM14 22H32M14 27H32" fill="#c9ecf5" stroke="#5e5e5e" strokeWidth="2" /><path d="M23 3C29 4 29 8 29 14M25 10L29 14L33 10M10 30C4 29 4 25 4 19M0 23L4 19L8 23" stroke="#5e5e5e" strokeWidth="2" /></svg></Slot>
      <Text $s={22.400} $w={90} $ls={0}>Switch</Text>
      <Slot $w={38}><RowsIcon c="#f2f3f4" s="#b9bbbd" /></Slot><Text $s={22.400} $c="#c2c3c6" $w={74} $ls={0}>Clear</Text>
      <Slot $w={38}><svg width="31" height="32" viewBox="0 0 31 32" fill="none"><path d="M1 3H30V26H1ZM1 9H30M1 15H30M1 21H30" fill="#eceef0" stroke="#b9bbbd" strokeWidth="2" /><path d="M2 16H29V25H2Z" fill="#cfeaf1" /><path d="M3 19L16 31M16 19L3 31" stroke="#e8a892" strokeWidth="3" /></svg></Slot><Text $s={22.600} $c="#c2c3c6" $w={90} $ls={0.300}>Delete</Text>
      <Slot $w={38}><svg width="33" height="32" viewBox="0 0 33 32" fill="none"><path d="M8 1H32V17H8ZM8 7H32" fill="#d9f0f5" stroke="#b9bbbd" strokeWidth="2" /><path d="M1 13H26V31H1ZM1 19H26M1 25H26" fill="#d3edf4" stroke="#aeb1b3" strokeWidth="2" /></svg></Slot><Text $s={22.600} $c="#c2c3c6" $ls={0.2}>Copy</Text>
      <Space /><svg width="29" height="26" viewBox="0 0 29 26"><path d="M2 3H27M2 13H27M2 23H27" stroke="#5e5e5e" strokeWidth="5.500" strokeLinecap="round" /></svg><Space $w={14} />
    </Toolbar>
    <FindArea>
      <FindRow>
        <FindInput $pl={9}><Text $s={22.600} $c="#222">peaton</Text><Down w={11} h={6} /></FindInput>
        <Space $w={13} /><Slot $w={40}><Magnifier w={23} sw={2.400} /></Slot><Slot $w={40}><Cross w={21} c="#cf6a4a" sw={3.800} /></Slot>
        <Text $s={22.800} $w={91} $ls={-0.100} $pt={2}>1 of 79</Text>
        <Spinner><Up w={18} /><Down w={18} h={9} c="#666" /></Spinner><RowsIcon /><Space /><Cross w={20} c="#666" sw={3.200} />
      </FindRow>
      <FindRow>
        <FindInput $pl={3}><Text $s={22.400} $c="#6a6a6a">Replace...</Text><Down w={11} h={6} /></FindInput>
        <Space $w={8} />
        <svg width="34" height="28" viewBox="0 0 34 28" fill="none"><path d="M0 14H30M17 2L30 14L17 26" stroke="#56a5d8" strokeWidth="4.500" /></svg><Space $w={9} />
        <svg width="36" height="30" viewBox="0 0 36 30" fill="none"><path d="M0 8H23M15 1L23 8L15 15M0 22H32M24 15L32 22L24 29" stroke="#56a5d8" strokeWidth="4" /></svg>
      </FindRow>
    </FindArea>
    <Grid>
      <GridTop>
        <GridCells>
          <HeadRow>
            <Corner><svg width="22" height="22" viewBox="0 0 22 22"><path d="M22 0V22H0Z" fill="#c8c8c8" /></svg></Corner>
            {cols.map(c => <HeadCell key={c.n} $w={c.w} $on={c.n === "Class"} $dark={c.dark}>{c.n}{c.n === "Class" && <Up w={16} c="#444" />}</HeadCell>)}
          </HeadRow>
          <Rows><RowStack>
            {data.map(([id, v], ri) => (
              <Row key={id} $alt={ri % 2 === 1}>
                <RowHead $on={id === "2600"}>{id}</RowHead>
                {cols.map((c, i) => <Cell key={c.n} $w={c.w} $r={c.r} $dark={c.dark} $bg={i === 2 && ri > 0 ? (ri === 1 ? "#c6e1f5" : "#6ab1dc") : undefined}>{v[i]}</Cell>)}
              </Row>
            ))}
          </RowStack></Rows>
        </GridCells>
        <VScroll><ChevronUp w={17} /><Space /><VThumb /><Chevron w={16} sw={2.500} /></VScroll>
      </GridTop>
      <HScroll><ChevronSide /><HThumb /><Space /><ChevronSide right /></HScroll>
    </Grid>
    <Footer>
      <ModeButton><RowsIcon c="#fff" a="#aee6f5" /></ModeButton><Space $w={20} /><RowsIcon h={22} /><Space $w={36} />
      <svg width="19" height="18" viewBox="0 0 19 18"><path d="M0 0H2V18H0ZM18 0V18L5 9Z" fill="#5e5e5e" /></svg><Space $w={26} />
      <svg width="19" height="18" viewBox="0 0 19 18"><path d="M17 0H19V18H17ZM1 0V18L14 9Z" fill="#5e5e5e" /></svg><Space $w={25} />
      <Text $s={22.600} $ls={0.250} $pt={4}>0 of 3,208 selected</Text><Space />
      <Text $s={22.600} $w={79} $ls={0.1} $pt={4}>Filters:</Text>
      <DisabledPair>
        <svg width="32" height="32" viewBox="0 0 32 32" fill="none"><circle cx="16" cy="16" r="14" fill="#e4ece9" stroke="#d3dade" strokeWidth="2.400" /><path d="M16 7V17H22" stroke="#c5ccd0" strokeWidth="2" /></svg>
        <svg width="32" height="32" viewBox="0 0 32 32" fill="none"><circle cx="16" cy="16" r="14" fill="#e4ece9" stroke="#d3dade" strokeWidth="2.400" /><path d="M4 9H22M8 4V14M16 4V14" stroke="#c5ccd0" strokeWidth="2" /></svg>
      </DisabledPair><Space $w={7} />
      <svg width="34" height="32" viewBox="0 0 34 32"><path d="M1 1H27V4L18 13V31H11V13L1 4Z" fill="#9a9a9a" stroke="#6e6e6e" strokeWidth="2" /><rect x="15" y="12" width="19" height="20" fill="#f8f8f8" /><path d="M18 13H33V31H18ZM18 22H33" stroke="#3f93cc" strokeWidth="4" strokeDasharray="4 2.500" fill="none" /></svg>
      <Space $w={2} /><VLine $h={30} /><Space $w={13} />
      <svg width="18" height="31" viewBox="0 0 18 31" fill="none"><path d="M9 3V15M2 9L9 2L16 9" stroke="#4f9a5c" strokeWidth="4" /><path d="M9 15V28M2 22L9 29L16 22" stroke="#e8963a" strokeWidth="4" /></svg><Space $w={30} />
      <svg width="12" height="4"><rect width="12" height="4" fill="#5e5e5e" /></svg><Space $w={16} />
      <Track><TrackFill /><TrackThumb /></Track><Space $w={15} />
      <svg width="16" height="16" viewBox="0 0 16 16"><path d="M8 0V16M0 8H16" stroke="#5e5e5e" strokeWidth="3.500" /></svg><Space $w={14} />
      <ZoomBox>119 %<Down w={10} h={7} /></ZoomBox><Space $w={10} /><VLine $h={30} /><Space $w={14} /><Refresh w={32} />
    </Footer>
  </LowerPanel>
);

/* ---------- explore panel ---------- */
const TreeBox = styled.div`flex: none; height: 405px; border: 2px solid #c2c2c2; background: #fff; padding: 3px 2px 0 10px;`;
const TreeRow = styled.div<{ $pl: number }>`height: 36px; display: flex; align-items: center; padding-left: ${p => p.$pl}px; gap: 12px; font-size: 22.600px;`;
const TreePick = styled.div`flex: 1; height: 36px; background: #c5daec; border: 2px solid #2a7ab8; padding-left: 1px; line-height: 32px;`;
const Dotted = styled.div`
  flex: none; height: 8px; margin: 2px 0 0; background-image: radial-gradient(circle at 2px 2px, #b4b4b4 1.300px, transparent 1.700px); background-size: 5px 4px;
`;
const EdgeTitle = styled.div`flex: none; height: 88px; padding: 15px 10px 0; font-size: 23.500px; line-height: 31px; font-weight: 700; color: #464646; white-space: nowrap;`;
const TabStrip = styled.div<{ $h: number; $pl: number }>`flex: none; height: ${p => p.$h}px; display: flex; align-items: flex-end; padding-left: ${p => p.$pl}px; position: relative;`;
const Tab = styled.div<{ $w: number; $on?: boolean; $b?: boolean }>`
  flex: none; width: ${p => p.$w}px; height: ${p => (p.$on ? 45 : 40)}px; margin-bottom: ${p => (p.$on ? -2 : 0)}px;
  border: 2px solid #c8c8cb; border-bottom: 0; background: ${p => (p.$on ? "#f6f6f7" : "#fff")}; color: ${p => (p.$on ? "#0079b8" : "#4a4a4a")};
  font-weight: ${p => (p.$on ? 600 : p.$b ? 500 : 400)}; font-size: 21.400px; text-align: center; line-height: ${p => (p.$on ? 38 : 37)}px; letter-spacing: -0.3px;
`;
const TabBody = styled.div`flex: 1; margin: 0 0 4px 0; border: 2px solid #c8c8cb; background: #eeeff1; display: flex; flex-direction: column; padding: 11px 19px 25px 11px; min-height: 0;`;
const TabTools = styled.div`flex: 1; display: flex; justify-content: flex-end; align-items: flex-start; gap: 18px; align-self: stretch; padding: 1px 4px 0 0;`;
const InfoBar = styled.div`flex: none; margin: 8px 0 0 8px; height: 52px; background: #dcedf8; display: flex; align-items: center; padding: 0 14px 0 26px;`;
const InfoDot = styled.div`width: 24px; height: 24px; border-radius: 50%; background: #4a9bd3; color: #fff; font: 700 19px/24px "Liberation Serif", serif; text-align: center;`;
const AttrTable = styled.div`flex: 1; margin: 0 13px 0 8px; border: 2px solid #c8c8cb; padding: 0 2px; display: flex; flex-direction: column;`;
const AttrHead = styled.div`flex: none; height: 43px; margin: 0 -2px; background: #dedede; border-bottom: 2px solid #c8c8cb; display: grid; grid-template-columns: 389px 195px 194px 1fr; font-size: 21px; font-weight: 500; color: #333;`;
const AttrHeadCell = styled.div`border-right: 2px solid #c8c8cb; padding: 0 0 0 13px; line-height: 43px; font-weight: 500;`;
const AttrGroup = styled.div<{ $first?: boolean }>`
  flex: none; margin: ${p => (p.$first ? 5 : 10)}px 2px 7px; height: 47px; border: 2px solid #dcdde0; display: flex; align-items: center; gap: 11px; padding-left: 13px;
  font-size: 21.2px; font-weight: 500; color: #2e2e2e; letter-spacing: -0.25px;
`;
const AttrRow = styled.div`flex: none; height: 38px; display: grid; grid-template-columns: 388px 195px 1fr; background: #fff; border-bottom: 2px solid #c8c8cb;`;
const AttrName = styled.div`border-right: 2px solid #c8c8cb; display: flex; justify-content: space-between; padding: 2px 10px 0 2px; font-size: 21.800px; line-height: 34px;`;
const AttrVal = styled.div`border-right: 2px solid #c8c8cb; padding-left: 7px; font-size: 20.400px; line-height: 34px; &:last-child { border-right: 0; }`;
const Unit = styled.span`color: #777;`;

const attrs: { g: string; rows: [string, string, string][] }[] = [
  { g: "Travel Mode (Driving)", rows: [["Impedance", "m", "46.0594"], ["Time Cost", "min", "0.552353"], ["Restrictions", "", "Prohibited"]] },
  { g: "Costs", rows: [["Meters", "m", "46.0594"], ["Minutes", "min", "0.552353"]] },
  { g: "Restrictions", rows: [["Drive a Car", "", "Prohibited"], ["One Way", "", "Prohibited"]] },
  { g: "Hierarchy", rows: [["Hierarchy", "", "9"]] },
];

const ExplorePanel = () => (
  <Panel $w={842}>
    <PanelHead $pl={11}>
      <Text $s={30.600}>Explore Network: ModeloVial_ND</Text><Space />
      <Slot $w={36}><Chevron w={16} h={9} c="#444" sw={2.400} /></Slot><Slot $w={34}><Pin /></Slot><Cross c="#444" />
    </PanelHead>
    <TreeBox>
      <TreeRow $pl={0}><Tri open />Network Elements (1)</TreeRow>
      <TreeRow $pl={32}><Tri open />Edges (1)</TreeRow>
      <TreeRow $pl={64}><Tri open />T25899EjeVialPlanarize (1)</TreeRow>
      <TreeRow $pl={118}><TreePick>OID: 1898, EIDs: (6205, 6206)</TreePick></TreeRow>
    </TreeBox>
    <Dotted />
    <EdgeTitle>Edge: T25899EjeVialPlanarize OID: 1898, EIDs: (along: 6205, against:<br />6206)</EdgeTitle>
    <TabStrip $h={40} $pl={0}><Tab $w={190} $on>Travel Attributes</Tab><Tab $w={144}>Connectivity</Tab></TabStrip>
    <TabBody>
      <TabStrip $h={44} $pl={0}>
        <Tab $w={90} $on>Values</Tab><Tab $w={106} $b>Settings</Tab>
        <TabTools><Refresh w={33} c="#bdbdbd" /><Funnel /></TabTools>
      </TabStrip>
      <InfoBar><InfoDot>i</InfoDot><Space $w={34} /><Text $s={22.900} $c="#4d4d4d">Query Time: None (not using time)</Text><Space /><Cross w={20} c="#777" /></InfoBar>
      <AttrTable>
        <AttrHead><AttrHeadCell>Name</AttrHeadCell><AttrHeadCell>Along</AttrHeadCell><AttrHeadCell>Against</AttrHeadCell></AttrHead>
        {attrs.map((a, i) => (
          <React.Fragment key={a.g}>
            <AttrGroup $first={i === 0}><Chevron w={18} h={12} sw={4} c="#5e5e5e" />{a.g}</AttrGroup>
            {a.rows.map(r => <AttrRow key={r[0]}><AttrName>{r[0]}<Unit>{r[1]}</Unit></AttrName><AttrVal>{r[2]}</AttrVal><AttrVal>{r[2]}</AttrVal></AttrRow>)}
          </React.Fragment>
        ))}
      </AttrTable>
    </TabBody>
  </Panel>
);

const menus: [string, number][] = [["Project", 153], ["Map", 116], ["Insert", 129], ["Analysis", 157], ["View", 120], ["Edit", 108], ["Imagery", 159], ["Share", 131], ["Help", 124]];

export default function App() {
  return (
    <Window>
      <Global />
      <TitleBar><TitleInner>
        <Slot $w={55}><NewProject /></Slot><Slot $w={57}><OpenProject /></Slot><Slot $w={51}><SaveProject /></Slot>
        <Slot $w={46}><Undo /></Slot><Slot $w={28}><Chevron w={13} h={9} /></Slot><Slot $w={46}><Undo c="#bcdaee" flip /></Slot><Slot $w={44}><Chevron w={13} h={9} /></Slot>
        <svg width="17" height="18" viewBox="0 0 17 18" fill="none"><path d="M1 1.500H16M1.500 8L8.500 15.500L15.500 8" stroke="#6a6a6a" strokeWidth="2.400" /></svg>
        <Space $w={1312} /><Text $s={21.400} $w={130} $pt={3}>ArcGISPro</Text>
        <CommandBox><Magnifier w={23} /><Text $s={21.400} $i $c="#858585">Command Search (Alt+Q)</Text></CommandBox>
        <Space /><Text $s={22.700} $w={579} $pt={3}>{"{R} - Escuela Colombiana de Ingeniería Julio Garavito"}</Text>
        <Avatar>{"{R}"}</Avatar><Space $w={31} /><Bell /><Space $w={57} /><Text $s={25}>?</Text><Space $w={73} />
        <svg width="22" height="3"><rect width="22" height="2.400" fill="#6a6a6a" /></svg><Space $w={66} />
        <svg width="22" height="22" viewBox="0 0 22 22" fill="none" stroke="#6a6a6a" strokeWidth="2"><path d="M1 6H16V21H1ZM6 6V1H21V16H16" /></svg><Space $w={65} />
        <Cross w={22} c="#6a6a6a" sw={1.800} /><Space $w={20} />
      </TitleInner></TitleBar>
      <MenuRow>
        {menus.map(([n, w]) => <MenuItem key={n} $w={w}>{n}</MenuItem>)}
        <ContextTabs><Text $c="#1e1e1e" $pt={3}>Network Dataset Layer</Text><ActiveTab>Data</ActiveTab></ContextTabs>
      </MenuRow>
      <Ribbon>
        <Group $w={119}><GroupRow><BigButton $w={104} $on><ExploreIcon /><BigLabel><LabelLine>Explore</LabelLine><LabelLine>Network</LabelLine></BigLabel></BigButton></GroupRow><Slot $w={104}><Space /><GroupName>Explore</GroupName><Space /></Slot></Group>
        <VLine $h={176} /><Space $w={13} />
        <Group $w={283}>
          <GroupRow>
            <BigButton $w={118}><AnalysisIcon /><BigLabel><LabelLine>Network</LabelLine><LabelLine>Analysis<Chevron w={12} h={9} sw={2.600} /></LabelLine></BigLabel></BigButton>
            <BigButton $w={149}><SourcesIcon /><BigLabel><LabelLine>Add Network</LabelLine><LabelLine>Sources</LabelLine></BigLabel></BigButton>
          </GroupRow>
          <Slot $w={268}><Space /><GroupName>Insert</GroupName><Space /></Slot>
        </Group>
        <VLine $h={176} />
        <CollapseSlot><ChevronUp w={21} h={12} c="#222" sw={2.800} /></CollapseSlot>
      </Ribbon>
      <Body>
        <Contents />
        <Center>
          <DocTabs>
            <DocTab $on $w={274}><MapIcon w={30} /><Text $s={22.400} $w={177} $pt={2}>NetworkAnalyst</Text><Cross w={19} c="#fff" /></DocTab>
            <DocTab $w={120}><MapIcon w={30} /><Text $s={22.800} $pt={2}>Test</Text></DocTab>
            <Space /><Slot $w={26}><Chevron w={17} c="#666" sw={2.500} /></Slot>
          </DocTabs>
          <BlueRule />
          <MapBox><MapCanvas /></MapBox>
          <Status />
          <LowerTabs><LowerTab><TableIcon /><Text $s={22.500} $w={248} $pt={3}>T25899EjeVialPlanarize</Text><Cross w={20} c="#666" /></LowerTab><Space /><Slot $w={26}><Chevron w={17} c="#666" sw={2.500} /></Slot></LowerTabs>
          <AttributeTable />
        </Center>
        <ExplorePanel />
        <SideStrip>
          <SideLabel $h={102}>Catalog</SideLabel><SideLabel $h={145}>Symbology</SideLabel><SideLabel $h={195}>Chart Properties</SideLabel><SideLabel $h={130}>Label Class</SideLabel>
        </SideStrip>
      </Body>
    </Window>
  );
}
